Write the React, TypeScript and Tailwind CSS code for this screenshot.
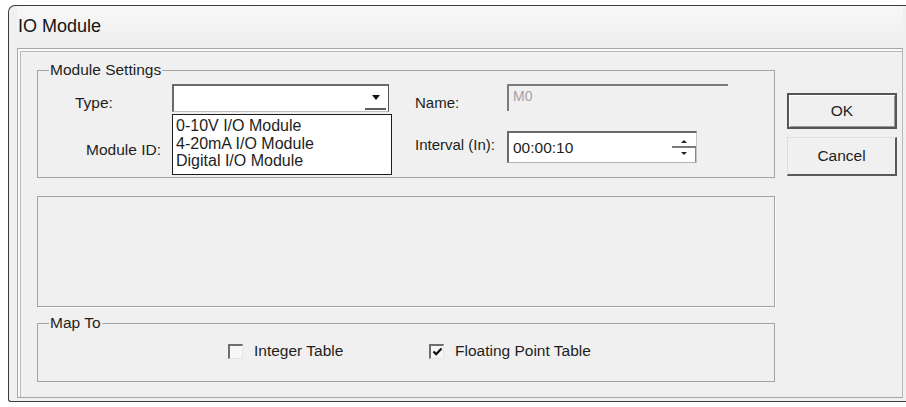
import React from 'react'

// classic etched group box with a caption on its top line
function GroupBox({ title, className, children }: { title: string; className?: string; children?: React.ReactNode }) {
  return (
    <fieldset className={`min-w-0 border border-[#a3a3a3] ${className ?? ''}`}>
      <legend className="ml-[11px] px-[1px] leading-[16px]">{title}</legend>
      {children}
    </fieldset>
  )
}

function CheckBox({ label, checked, className }: { label: string; checked?: boolean; className?: string }) {
  return (
    <div className={`flex items-center ${className ?? ''}`}>
      <span className="w-[15px] h-[15px] flex items-center justify-center border-t-2 border-l-2 border-r border-b border-t-[#6e6e6e] border-l-[#6e6e6e] border-r-[#e4e4e4] border-b-[#e4e4e4] bg-[#f7f7f7]">
        {checked && (
          <svg width="11" height="11" viewBox="0 0 11 11">
            <path d="M1.5 5.5 L4.2 8.2 L9.5 2.5" fill="none" stroke="#111" strokeWidth="2.2" />
          </svg>
        )}
      </span>
      <span className="ml-[11px] leading-[16px]">{label}</span>
    </div>
  )
}

export default function App() {
  const types = ['0-10V I/O Module', '4-20mA I/O Module', 'Digital I/O Module']

  return (
    <div className="w-[906px] h-[407px] bg-white overflow-hidden font-['Liberation_Sans',Arial,sans-serif] text-[15.5px] text-[#1e1e1e]">
      <div className="ml-[8px] mt-[5px] h-[397px] flex flex-col rounded-tl-[7px] rounded-bl-[3px] border-l border-t border-b border-[#3a3a3a] bg-[#f0f0f0] pl-[8px] pr-[3px] pb-[3px]">
        {/* title bar */}
        <div className="h-[42px] pt-[11px] pl-[1px] text-[18px] leading-[18px] text-[#141414] bg-gradient-to-b from-[#f8f8f8] to-[#eeeeee]">
          IO Module
        </div>

        {/* client area */}
        <div className="h-[350px] flex border border-[#a6a6a6] border-r-[#b8b8b8] shadow-[inset_2px_2px_0_#fafafa,inset_3px_3px_0_#b9b9b9] bg-[#f0f0f0]">
          <div className="ml-[19px] mt-[13px] w-[738px] flex flex-col">
            <GroupBox title="Module Settings" className="h-[116px]">
              <div className="flex h-[28px] mt-[6px]">
                <div className="w-[134px] pl-[37px] pt-[11px] leading-[16px]">Type:</div>
                <div className="relative w-[217px] h-[28px]">
                  <div className="h-full flex border-t-2 border-l-2 border-r border-b border-t-[#6a6a6a] border-l-[#6a6a6a] border-r-[#555] border-b-[#bdbdbd] bg-white">
                    <div className="flex-1" />
                    <div className="w-[21px] h-[23px] mt-[1px] mr-[2px] flex items-center justify-center border-b-2 border-[#5c5c5c]">
                      <svg width="8" height="5" viewBox="0 0 8 5">
                        <path d="M0 0 H8 L4 5 Z" fill="#111" />
                      </svg>
                    </div>
                  </div>
                  {/* open drop-down list */}
                  <div className="absolute left-0 top-[30px] z-10 w-[220px] h-[61px] border border-[#1c1c1c] bg-white pt-[2px] pl-[3px] text-[16px]">
                    {types.map((t) => (
                      <div key={t} className="leading-[17.5px] whitespace-nowrap">{t}</div>
                    ))}
                  </div>
                </div>
                <div className="ml-[26px] w-[92px] pt-[11px] leading-[16px] text-[15px]">Name:</div>
                <div className="w-[221px] h-[27px] border-t-2 border-l-2 border-[#7b7b7b] pl-[4px] pt-[2px] text-[14px] leading-[16px] text-[#a2a2a2]">
                  M0
                </div>
              </div>

              <div className="flex h-[32px] mt-[19px]">
                <div className="w-[134px] pl-[48px] pt-[11px] leading-[16px]">Module ID:</div>
                <div className="w-[217px] h-[28px] mt-[3px] border-t-2 border-l-2 border-[#6a6a6a] bg-white" />
                <div className="ml-[26px] w-[92px] pt-[6px] leading-[16px] text-[15px] whitespace-nowrap">Interval (In):</div>
                <div className="w-[190px] h-[32px] flex border-t-2 border-l-2 border-r border-b border-t-[#6a6a6a] border-l-[#6a6a6a] border-r-[#c4c4c4] border-b-[#b0b0b0] bg-white">
                  <div className="flex-1 flex items-center pl-[4px] leading-[16px]">00:00:10</div>
                  {/* spin buttons */}
                  <div className="w-[24px] flex flex-col">
                    <div className="flex-1 flex items-end justify-center pb-[3px] border-b-2 border-[#7a7a7a]">
                      <svg width="6" height="3" viewBox="0 0 6 3">
                        <path d="M0 3 H6 L3 0 Z" fill="#222" />
                      </svg>
                    </div>
                    <div className="flex-1 flex items-start justify-center pt-[4px] border-r border-[#8a8a8a]">
                      <svg width="6" height="3" viewBox="0 0 6 3">
                        <path d="M0 0 H6 L3 3 Z" fill="#222" />
                      </svg>
                    </div>
                  </div>
                </div>
              </div>
            </GroupBox>

            <div className="mt-[18px] h-[111px] border border-[#a3a3a3] shadow-[1px_1px_0_#fbfbfb]" />

            <GroupBox title="Map To" className="mt-[8px] h-[67px]">
              <div className="flex mt-[12px] ml-[190px]">
                <CheckBox label="Integer Table" className="w-[201px]" />
                <CheckBox label="Floating Point Table" checked />
              </div>
            </GroupBox>
          </div>

          <div className="ml-[12px] mt-[44px] w-[110px] flex flex-col">
            <button className="h-[36px] border-2 border-[#555] shadow-[inset_1px_1px_0_#fff,inset_-1px_-1px_0_#9a9a9a] bg-[#f0f0f0] leading-[16px]">
              OK
            </button>
            <button className="mt-[8px] h-[39px] border-t border-l border-r-2 border-b-2 border-t-[#dedede] border-l-[#dedede] border-r-[#595959] border-b-[#595959] bg-[#f0f0f0] leading-[16px]">
              Cancel
            </button>
          </div>
        </div>
      </div>
    </div>
  )
}
